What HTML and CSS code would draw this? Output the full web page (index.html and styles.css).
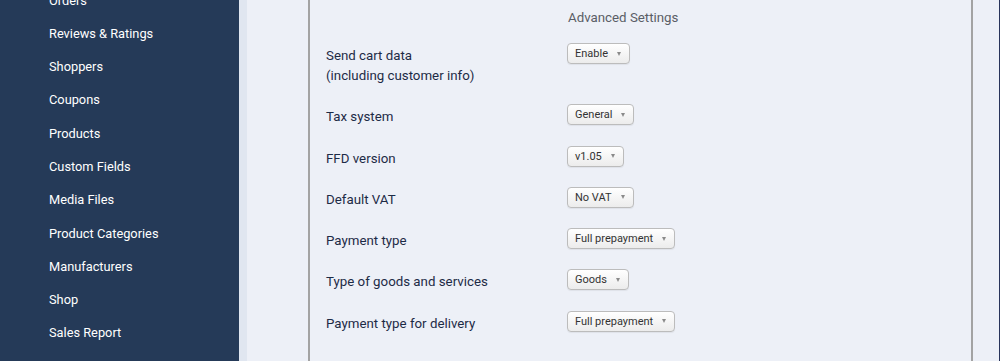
FILE: index.html
```html
<!DOCTYPE html>
<html>
<head>
    <meta charset="utf-8" />
    <meta name="viewport" content="width=device-width, initial-scale=1" />
    <title>Advanced Settings</title>
    <link rel="stylesheet" href="styles.css">
</head>
<body>
    <div class="page">
        <div class="sidebar">
            <ul class="menu">
                <li>Orders</li>
                <li>Reviews &amp; Ratings</li>
                <li>Shoppers</li>
                <li>Coupons</li>
                <li>Products</li>
                <li>Custom Fields</li>
                <li>Media Files</li>
                <li>Product Categories</li>
                <li>Manufacturers</li>
                <li>Shop</li>
                <li>Sales Report</li>
            </ul>
        </div>

        <div class="main">
            <div class="panel">
                <div class="heading">Advanced Settings</div>

                <div class="row">
                    <div class="label">Send cart data<br />(including customer info)</div>
                    <div class="select">Enable <i class="arrow"></i></div>
                </div>
                <div class="row">
                    <div class="label">Tax system</div>
                    <div class="select">General <i class="arrow"></i></div>
                </div>
                <div class="row">
                    <div class="label">FFD version</div>
                    <div class="select">v1.05 <i class="arrow"></i></div>
                </div>
                <div class="row">
                    <div class="label">Default VAT</div>
                    <div class="select">No VAT <i class="arrow"></i></div>
                </div>
                <div class="row">
                    <div class="label">Payment type</div>
                    <div class="select">Full prepayment <i class="arrow"></i></div>
                </div>
                <div class="row">
                    <div class="label">Type of goods and services</div>
                    <div class="select">Goods <i class="arrow"></i></div>
                </div>
                <div class="row">
                    <div class="label">Payment type for delivery</div>
                    <div class="select">Full prepayment <i class="arrow"></i></div>
                </div>
            </div>
        </div>
    </div>
</body>
</html>
```

FILE: styles.css
```css
html, body {
    margin: 0;
    height: 100%;
    width: 100%;
    overflow: hidden;
    font: 13.3px Roboto, "Liberation Sans", sans-serif;
}

.page {
    display: flex;
    height: 100%;
    background-color: #edf0f7;
    border-right: 1px solid #28335a;
    box-sizing: border-box;
}

.sidebar {
    width: 239px;
    flex-shrink: 0;
    background-color: #253a58;
}

.menu {
    list-style: none;
    margin: -16.5px 0 0 0;
    padding: 0 0 0 49px;
    font-size: 12.8px;
}

.menu li {
    height: 33.3px;
    line-height: 33.3px;
    color: #ffffff;
    white-space: nowrap;
}

.main {
    flex: 1;
    display: flex;
    padding: 0 26px 0 61px;
    border-left: 8px solid #e0e6f0;
}

.panel {
    flex: 1;
    border-left: 2px solid #a3a3a3;
    border-right: 2px solid #a3a3a3;
    padding: 8px 16px 0 16px;
}

.heading {
    margin-left: 242px;
    line-height: 20px;
    color: #5a5e66;
    margin-bottom: 15px;
}

.row {
    display: grid;
    grid-template-columns: 241px auto;
    justify-content: start;
    align-items: start;
    margin-bottom: 18.3px;
}

.label {
    padding-top: 3px;
    line-height: 20px;
    color: #1d2b46;
}

.select {
    display: flex;
    align-items: center;
    height: 19px;
    padding: 0 8px 0 7px;
    font-size: 11px;
    color: #333333;
    border: 1px solid #bcbcbc;
    border-radius: 4px;
    background: linear-gradient(#ffffff, #ececec);
    box-shadow: 0 1px 1px rgba(0, 0, 0, 0.06);
    white-space: nowrap;
}

.arrow {
    width: 0;
    height: 0;
    margin-left: 9px;
    border-left: 2.5px solid transparent;
    border-right: 2.5px solid transparent;
    border-top: 4px solid #8a8a8a;
}
```
